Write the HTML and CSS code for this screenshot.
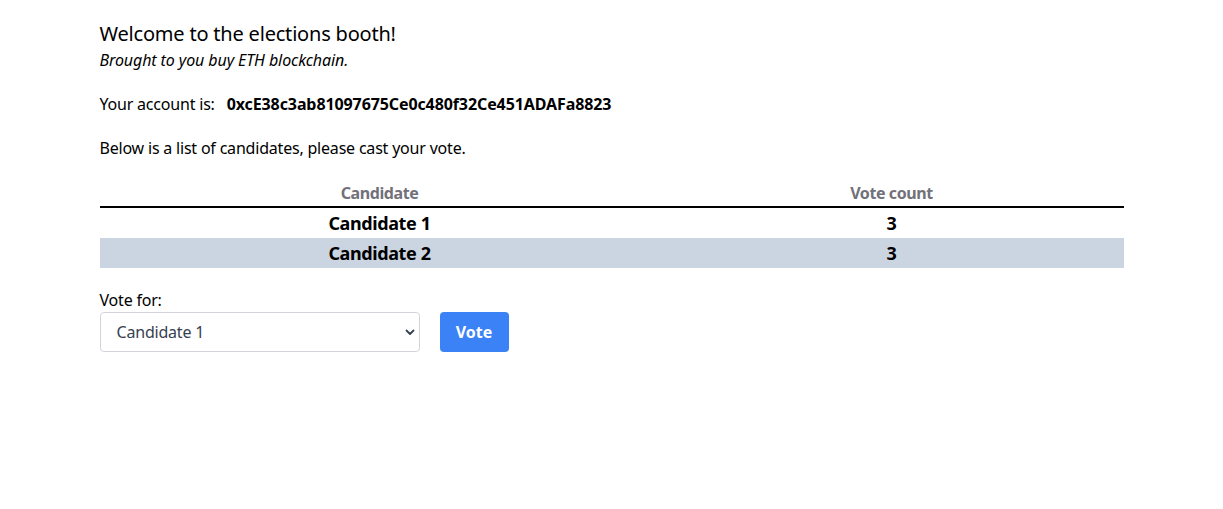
FILE: index.html
```html
<!DOCTYPE html>
<html>
<head>
<meta charset="utf-8">
<link rel="stylesheet" href="styles.css">
</head>
<body>
<div class="container">
  <h1 class="title">Welcome to the elections booth!</h1>
  <p class="subtitle">Brought to you buy ETH blockchain.</p>
  <p class="account">Your account is: <span class="address">0xcE38c3ab81097675Ce0c480f32Ce451ADAFa8823</span></p>
  <p class="intro">Below is a list of candidates, please cast your vote.</p>
  <table class="votes">
    <thead>
      <tr><th class="col-name">Candidate</th><th class="col-count">Vote count</th></tr>
    </thead>
    <tbody>
      <tr><td>Candidate 1</td><td>3</td></tr>
      <tr class="alt"><td>Candidate 2</td><td>3</td></tr>
    </tbody>
  </table>
  <form class="vote-form">
    <label class="label" for="cand">Vote for:</label>
    <div class="controls">
      <div class="select-wrap">
        <select id="cand" class="select">
          <option>Candidate 1</option>
          <option>Candidate 2</option>
        </select>
        <svg class="chevron" width="12" height="12" viewBox="0 0 12 12"><path d="M2.5 4.5 L6 8 L9.5 4.5" fill="none" stroke="#374151" stroke-width="1.8" stroke-linecap="round" stroke-linejoin="round"/></svg>
      </div>
      <button type="button" class="btn">Vote</button>
    </div>
  </form>
</div>
</body>
</html>
```

FILE: styles.css
```css
* { box-sizing: border-box; }
body {
  margin: 0;
  font-family: "Noto Sans", "DejaVu Sans", sans-serif;
  font-size: 16px;
  line-height: 24px;
  letter-spacing: -0.2px;
  color: #000;
  background: #fff;
}
.container {
  max-width: 1024px;
  margin: 0 auto;
  padding-top: 20px;
}
.title {
  margin: 0;
  font-size: 20px;
  line-height: 28px;
  font-weight: 400;
}
.subtitle {
  margin: 0;
  font-style: italic;
  letter-spacing: -0.1px;
}
.account {
  margin: 20px 0 0;
}
.address {
  font-weight: 700;
  margin-left: 8px;
  letter-spacing: -0.1px;
}
.intro {
  margin: 20px 0 0;
}
.votes {
  margin-top: 20px;
  width: 100%;
  border-collapse: collapse;
}
.votes th {
  color: #71717a;
  font-weight: 700;
  letter-spacing: -0.4px;
  padding: 1px 0 1px;
  text-align: center;
  border-bottom: 2px solid #000;
}
.col-name { width: 560px; }
.votes td {
  font-weight: 700;
  font-size: 18px;
  letter-spacing: -0.4px;
  text-align: center;
  padding: 3px 0;
  height: 30px;
}
.votes tr.alt td { background: #cbd5e1; }
.vote-form {
  margin-top: 20px;
}
.label { display: block; }
.controls {
  display: flex;
  gap: 20px;
}
.select-wrap {
  position: relative;
  width: 320px;
}
.select {
  appearance: none;
  -webkit-appearance: none;
  width: 100%;
  height: 40px;
  padding: 0 32px 0 16px;
  border: 1px solid #d1d5db;
  border-radius: 4px;
  background: #fff;
  font-family: inherit;
  font-size: 16px;
  letter-spacing: -0.2px;
  color: #374151;
}
.chevron {
  position: absolute;
  right: 4px;
  top: 14px;
  pointer-events: none;
}
.btn {
  height: 40px;
  width: 69px;
  border: none;
  border-radius: 4px;
  background: #3b82f6;
  color: #fff;
  font-family: inherit;
  font-size: 16px;
  font-weight: 700;
}
```
